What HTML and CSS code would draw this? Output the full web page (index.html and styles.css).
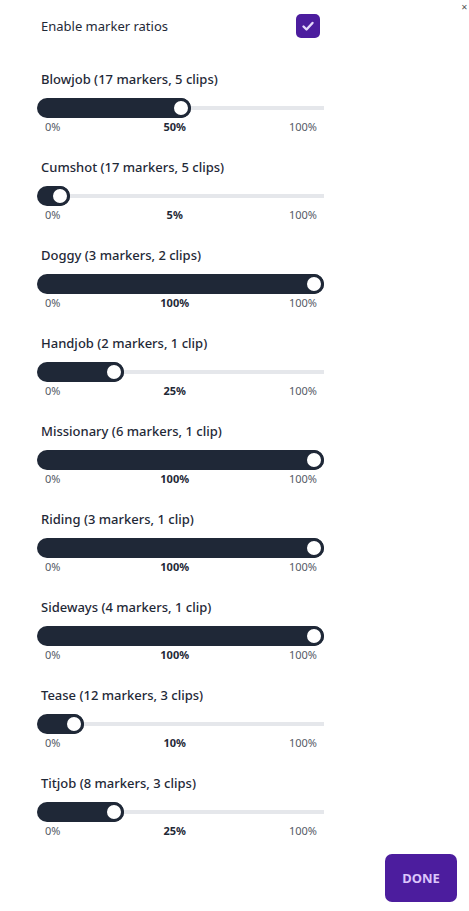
FILE: index.html
```html
<!DOCTYPE html>
<html lang="en">
<head>
    <meta charset="UTF-8">
    <meta name="viewport" content="width=device-width, initial-scale=1.0">
    <title>Marker Ratios</title>
    <link rel="stylesheet" href="styles.css">
</head>
<body>
    <span class="close">✕</span>

    <div class="panel">
        <div class="toggle-row">
            <span>Enable marker ratios</span>
            <span class="checkbox">
                <svg width="14" height="14" viewBox="0 0 14 14"><path d="M2.5 7.5l3 3 6-6.5" fill="none" stroke="#e4d8fb" stroke-width="2.4" stroke-linecap="round" stroke-linejoin="round"/></svg>
            </span>
        </div>

        <div class="ratio">
            <div class="ratio-title">Blowjob (17 markers, 5 clips)</div>
            <div class="slider"><div class="fill" style="width: 153.5px"><span class="thumb"></span></div></div>
            <div class="scale"><span>0%</span><b>50%</b><span>100%</span></div>
        </div>

        <div class="ratio">
            <div class="ratio-title">Cumshot (17 markers, 5 clips)</div>
            <div class="slider"><div class="fill" style="width: 33.4px"><span class="thumb"></span></div></div>
            <div class="scale"><span>0%</span><b>5%</b><span>100%</span></div>
        </div>

        <div class="ratio">
            <div class="ratio-title">Doggy (3 markers, 2 clips)</div>
            <div class="slider"><div class="fill" style="width: 287px"><span class="thumb"></span></div></div>
            <div class="scale"><span>0%</span><b>100%</b><span>100%</span></div>
        </div>

        <div class="ratio">
            <div class="ratio-title">Handjob (2 markers, 1 clip)</div>
            <div class="slider"><div class="fill" style="width: 86.8px"><span class="thumb"></span></div></div>
            <div class="scale"><span>0%</span><b>25%</b><span>100%</span></div>
        </div>

        <div class="ratio">
            <div class="ratio-title">Missionary (6 markers, 1 clip)</div>
            <div class="slider"><div class="fill" style="width: 287px"><span class="thumb"></span></div></div>
            <div class="scale"><span>0%</span><b>100%</b><span>100%</span></div>
        </div>

        <div class="ratio">
            <div class="ratio-title">Riding (3 markers, 1 clip)</div>
            <div class="slider"><div class="fill" style="width: 287px"><span class="thumb"></span></div></div>
            <div class="scale"><span>0%</span><b>100%</b><span>100%</span></div>
        </div>

        <div class="ratio">
            <div class="ratio-title">Sideways (4 markers, 1 clip)</div>
            <div class="slider"><div class="fill" style="width: 287px"><span class="thumb"></span></div></div>
            <div class="scale"><span>0%</span><b>100%</b><span>100%</span></div>
        </div>

        <div class="ratio">
            <div class="ratio-title">Tease (12 markers, 3 clips)</div>
            <div class="slider"><div class="fill" style="width: 46.7px"><span class="thumb"></span></div></div>
            <div class="scale"><span>0%</span><b>10%</b><span>100%</span></div>
        </div>

        <div class="ratio">
            <div class="ratio-title">Titjob (8 markers, 3 clips)</div>
            <div class="slider"><div class="fill" style="width: 86.8px"><span class="thumb"></span></div></div>
            <div class="scale"><span>0%</span><b>25%</b><span>100%</span></div>
        </div>
    </div>

    <div class="footer">
        <button type="button" class="done">DONE</button>
    </div>
</body>
</html>
```

FILE: styles.css
```css
body {
    margin: 0;
    background-color: white;
    font-family: "Noto Sans", "Open Sans", sans-serif;
    color: #1f2937;
    position: relative;
}

.close {
    position: absolute;
    top: 2px;
    right: 1px;
    font-size: 8px;
    line-height: 10px;
    color: #555;
}

.panel {
    width: 287px;
    margin-left: 37px;
    padding-top: 14px;
}

.toggle-row {
    display: flex;
    justify-content: space-between;
    align-items: center;
    padding: 0 4px;
    font-size: 13px;
    height: 24px;
    margin-bottom: 32px;
}

.checkbox {
    width: 24px;
    height: 24px;
    border-radius: 5px;
    background-color: #4c1d9e;
    display: flex;
    align-items: center;
    justify-content: center;
}

.ratio {
    margin-bottom: 23px;
}

.ratio-title {
    font-size: 13px;
    font-weight: 500;
    line-height: 18px;
    padding-left: 4px;
    margin-bottom: 10px;
}

.slider {
    height: 20px;
    background: linear-gradient(#e5e7eb, #e5e7eb) center / 100% 4px no-repeat;
}

.fill {
    position: relative;
    height: 20px;
    border-radius: 10px;
    background-color: #1f2837;
}

.thumb {
    position: absolute;
    right: 0;
    top: 0;
    width: 20px;
    height: 20px;
    box-sizing: border-box;
    border-radius: 50%;
    border: 3px solid #1f2837;
    background-color: white;
}

.scale {
    display: flex;
    justify-content: space-between;
    padding: 0 7px 0 8px;
    font-size: 11px;
    line-height: 16px;
    margin-top: 1px;
    color: #555b66;
}

.scale b {
    color: #1f2937;
}

.footer {
    display: flex;
    justify-content: flex-end;
    padding-right: 12px;
    margin-top: -8px;
}

.done {
    width: 72px;
    height: 48px;
    border: none;
    border-radius: 7px;
    background-color: #4c1d9e;
    color: #dcc6fb;
    font-family: "Noto Sans", "Open Sans", sans-serif;
    font-weight: 700;
    font-size: 13px;
}
```
